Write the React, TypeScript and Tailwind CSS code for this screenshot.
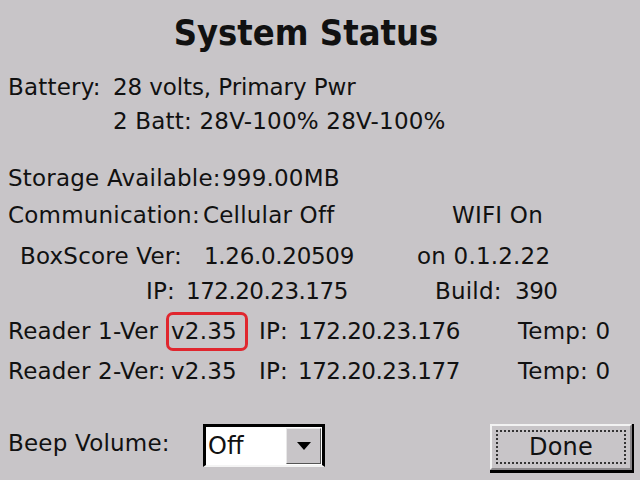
import React from "react";

const font = { fontFamily: '"DejaVu Sans", sans-serif' };
const titleFont = { fontFamily: '"DejaVu Sans Condensed", "DejaVu Sans", sans-serif' };

export default function App() {
  return (
    <div
      className="w-[640px] h-[480px] bg-[#c8c5c8] text-[#111] text-[23px] tracking-[0.2px] leading-[34px] overflow-hidden flex flex-col"
      style={font}
    >
      <div
        className="h-[66px] w-[612px] flex items-center justify-center font-bold text-[36px] tracking-normal"
        style={titleFont}
      >
        System Status
      </div>

      <div className="mt-[4px] h-[34px] flex items-center whitespace-nowrap pl-[8px]">
        <span className="w-[105px]">Battery:</span>
        <span className="tracking-[-0.1px]">28 volts, Primary Pwr</span>
      </div>
      <div className="h-[34px] flex items-center whitespace-nowrap pl-[113px]">
        <span>2 Batt: 28V-100% 28V-100%</span>
      </div>

      <div className="mt-[23px] h-[34px] flex items-center whitespace-nowrap pl-[8px]">
        <span className="w-[214px]">Storage Available:</span>
        <span>999.00MB</span>
      </div>

      <div className="mt-[3px] h-[34px] flex items-center whitespace-nowrap pl-[8px]">
        <span className="w-[195px]">Communication:</span>
        <span className="w-[249px]">Cellular Off</span>
        <span>WIFI On</span>
      </div>

      <div className="mt-[7px] h-[34px] flex items-center whitespace-nowrap pl-[20px]">
        <span className="w-[184px]">BoxScore Ver:</span>
        <span className="w-[213px] tracking-[-0.3px]">1.26.0.20509</span>
        <span>on 0.1.2.22</span>
      </div>

      <div className="mt-[1px] h-[34px] flex items-center whitespace-nowrap pl-[146px]">
        <span className="w-[40px]">IP:</span>
        <span className="w-[249px] tracking-[-0.5px]">172.20.23.175</span>
        <span className="w-[80px]">Build:</span>
        <span className="tracking-[-0.5px]">390</span>
      </div>

      <div className="mt-[6px] h-[34px] flex items-center whitespace-nowrap pl-[8px]">
        <span className="w-[163px]">Reader 1-Ver</span>
        <span className="w-[88px] relative">
          v2.35
          <span className="absolute left-[-5px] top-[-2px] w-[82px] h-[39px] border-[3px] border-[#e0262e] rounded-[7px]" />
        </span>
        <span className="w-[39px]">IP:</span>
        <span className="w-[220px] tracking-[-0.5px]">172.20.23.176</span>
        <span>Temp: 0</span>
      </div>

      <div className="mt-[6px] h-[34px] flex items-center whitespace-nowrap pl-[8px]">
        <span className="w-[163px]">Reader 2-Ver:</span>
        <span className="w-[88px]">v2.35</span>
        <span className="w-[39px]">IP:</span>
        <span className="w-[220px] tracking-[-0.5px]">172.20.23.177</span>
        <span>Temp: 0</span>
      </div>

      <div className="mt-[36px] h-[49px] flex items-start whitespace-nowrap pl-[8px]">
        <span className="w-[195px] mt-[2px]">Beep Volume:</span>
        <div className="w-[122px] h-[43px] bg-white border-[3px] border-black border-b-[#f4f4f4] border-b-[2px] flex items-stretch">
          <span className="flex-1 pl-[2px] leading-[38px] text-[24px] tracking-normal">Off</span>
          <div className="w-[35px] my-[1px] mr-[1px] bg-[#c8c5c8] border border-t-[#e8e8e8] border-l-[#e8e8e8] border-r-[#555] border-b-[#555] flex items-center justify-center">
            <svg width="16" height="10" viewBox="0 0 16 10">
              <polygon points="1,1 15,1 8,9" fill="#000" />
            </svg>
          </div>
        </div>
        <div className="ml-[165px] w-[144px] h-[49px] bg-black pr-[2px] pb-[3px]">
          <div className="w-full h-full bg-[#c8c5c8] border-t-[2px] border-l-[2px] border-[#f2f2f2] border-r-[2px] border-r-[#8a878a] border-b-[2px] border-b-[#8a878a] p-[4px]">
            <div className="w-full h-full border-[2px] border-dotted border-[#333] flex items-center justify-center text-[24px]">
              Done
            </div>
          </div>
        </div>
      </div>
    </div>
  );
}
